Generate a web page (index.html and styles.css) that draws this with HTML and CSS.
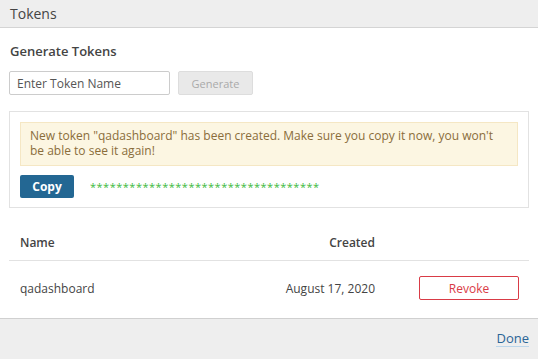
FILE: index.html
```html
<!DOCTYPE html>
<html lang="en">
<head>
<meta charset="UTF-8">
<title>Tokens</title>
<link rel="stylesheet" href="styles.css">
</head>
<body>
    <div class="dialog">
        <div class="dialog-header">Tokens</div>

        <div class="dialog-body">
            <h2 class="section-title">Generate Tokens</h2>
            <form class="generate-form">
                <input type="text" class="token-input" placeholder="Enter Token Name">
                <button type="button" class="btn-generate" disabled>Generate</button>
            </form>

            <div class="token-card">
                <div class="alert">New token "qadashboard" has been created. Make sure you copy it now, you won't be able to see it again!</div>
                <div class="token-row">
                    <button type="button" class="btn-copy">Copy</button>
                    <span class="token-value">***********************************</span>
                </div>
            </div>

            <table class="token-table">
                <thead>
                    <tr>
                        <th>Name</th>
                        <th class="col-created">Created</th>
                        <th class="col-action"></th>
                    </tr>
                </thead>
                <tbody>
                    <tr>
                        <td>qadashboard</td>
                        <td class="col-created">August 17, 2020</td>
                        <td class="col-action"><button type="button" class="btn-revoke">Revoke</button></td>
                    </tr>
                </tbody>
            </table>
        </div>

        <div class="dialog-footer">
            <a href="#" class="done-link">Done</a>
        </div>
    </div>
</body>
</html>
```

FILE: styles.css
```css
body {
    margin: 0;
    padding: 0;
    font-family: 'Open Sans', sans-serif;
    font-size: 12px;
    color: #333;
    background-color: #fff;
}

.dialog {
    width: 538px;
    height: 359px;
    display: flex;
    flex-direction: column;
}

.dialog-header {
    height: 28px;
    box-sizing: border-box;
    padding: 4px 10px 0;
    background-color: #eeeeee;
    border-bottom: 1px solid #d4d4d4;
    font-size: 14px;
    color: #444;
}

.dialog-body {
    flex: 1;
    padding: 0 9px;
}

.section-title {
    margin: 14px 1px 0;
    font-size: 13px;
    font-weight: 600;
    color: #444;
}

.generate-form {
    display: flex;
    gap: 8px;
    margin-top: 11px;
}

.token-input {
    width: 161px;
    height: 24px;
    box-sizing: border-box;
    padding: 0 7px;
    border: 1px solid #ccc;
    border-radius: 2px;
    font-family: inherit;
    font-size: 12px;
}

.token-input::placeholder {
    color: #555;
}

.btn-generate {
    width: 75px;
    height: 24px;
    border: 1px solid #ddd;
    border-radius: 2px;
    background-color: #e9e9e9;
    color: #aaa;
    font-family: inherit;
    font-size: 11px;
}

.token-card {
    margin-top: 16px;
    height: 97px;
    box-sizing: border-box;
    padding: 10px;
    border: 1px solid #e2e2e2;
}

.alert {
    height: 44px;
    box-sizing: border-box;
    padding: 5px 9px;
    background-color: #fcf6e2;
    border: 1px solid #f5e7c4;
    color: #8a6d3b;
    line-height: 15px;
}

.token-row {
    display: flex;
    align-items: center;
    gap: 16px;
    margin-top: 9px;
}

.btn-copy {
    width: 54px;
    height: 23px;
    border: none;
    border-radius: 2px;
    background-color: #236793;
    color: #fff;
    font-family: inherit;
    font-size: 12px;
    font-weight: 700;
}

.token-value {
    color: #3cb93c;
    font-size: 11px;
    letter-spacing: 0.5px;
}

.token-table {
    width: 100%;
    margin-top: 19px;
    border-collapse: collapse;
}

.token-table th {
    padding: 7px 11px 9px;
    border-bottom: 1px solid #e2e2e2;
    text-align: left;
    font-weight: 600;
    font-size: 12px;
    color: #444;
}

.token-table td {
    padding: 15px 11px 0;
    text-align: left;
    color: #444;
}

.token-table .col-created {
    text-align: right;
}

.token-table .col-action {
    width: 100px;
    padding-left: 33px;
    padding-right: 10px;
}

.btn-revoke {
    width: 100px;
    height: 24px;
    border: 1px solid #d93b46;
    border-radius: 2px;
    background-color: #fff;
    color: #d93b46;
    font-family: inherit;
    font-size: 12px;
}

.dialog-footer {
    height: 41px;
    box-sizing: border-box;
    display: flex;
    justify-content: flex-end;
    align-items: center;
    padding: 0 9px 0;
    background-color: #eeeeee;
    border-top: 1px solid #d0d0d0;
}

.done-link {
    color: #2a6496;
    text-decoration: none;
    border-bottom: 1px solid #bcd6ea;
    font-size: 13px;
    line-height: 15px;
}
```
